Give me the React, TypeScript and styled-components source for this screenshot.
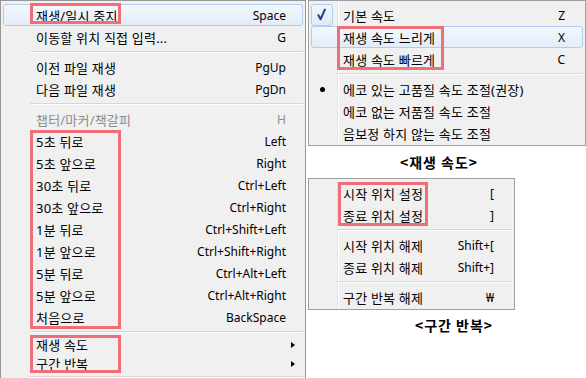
import styled, { createGlobalStyle } from "styled-components";

const GlobalStyle = createGlobalStyle`
  html, body {
    margin: 0;
    padding: 0;
    background: #ffffff;
  }
  body {
    font-family: "Noto Sans", "Noto Sans CJK KR", sans-serif;
    font-size: 12px;
    color: #000000;
  }
`;

const leftTop = [
  { label: "이동할 위치 직접 입력...", key: "G" },
];

const fileItems = [
  { label: "이전 파일 재생", key: "PgUp" },
  { label: "다음 파일 재생", key: "PgDn" },
];

const seekItems = [
  { label: "5초 뒤로", key: "Left" },
  { label: "5초 앞으로", key: "Right" },
  { label: "30초 뒤로", key: "Ctrl+Left" },
  { label: "30초 앞으로", key: "Ctrl+Right" },
  { label: "1분 뒤로", key: "Ctrl+Shift+Left" },
  { label: "1분 앞으로", key: "Ctrl+Shift+Right" },
  { label: "5분 뒤로", key: "Ctrl+Alt+Left" },
  { label: "5분 앞으로", key: "Ctrl+Alt+Right" },
  { label: "처음으로", key: "BackSpace" },
];

const CheckMark = () => (
  <svg width="22" height="22" viewBox="0 0 22 22">
    <polyline
      points="7,10.5 9.6,15.2 14.2,4.8"
      fill="none"
      stroke="#1f3d8a"
      strokeWidth="2"
      strokeLinejoin="round"
    />
  </svg>
);

const App = () => {
  return (
    <>
      <GlobalStyle />
      <Page>
        <LeftMenu>
          <Group $left={27} $width={91} $top={-1} $bottom={2}>
            <Item $active>
              <Label>재생/일시 중지</Label>
              <Key>Space</Key>
            </Item>
          </Group>
          {leftTop.map((item) => (
            <Item key={item.label}>
              <Label>{item.label}</Label>
              <Key>{item.key}</Key>
            </Item>
          ))}
          <Separator />
          {fileItems.map((item) => (
            <Item key={item.label}>
              <Label>{item.label}</Label>
              <Key>{item.key}</Key>
            </Item>
          ))}
          <Separator />
          <Item $disabled>
            <Label>챕터/마커/책갈피</Label>
            <Key>H</Key>
          </Item>
          <Group $left={27} $width={91} $top={0} $bottom={-1}>
            {seekItems.map((item) => (
              <Item key={item.label}>
                <Label>{item.label}</Label>
                <Key>{item.key}</Key>
              </Item>
            ))}
          </Group>
          <Separator $h={7} />
          <Group $left={27} $width={91} $top={0} $bottom={0}>
            <Item $h={19}>
              <Label>재생 속도</Label>
              <Arrow />
            </Item>
            <Item $h={19}>
              <Label>구간 반복</Label>
              <Arrow />
            </Item>
          </Group>
          <Separator $h={7} />
        </LeftMenu>

        <RightColumn>
          <SideMenu $width={278}>
            <SideItem>
              <IconCell>
                <CheckBox>
                  <CheckMark />
                </CheckBox>
              </IconCell>
              <Label>기본 속도</Label>
              <Key>Z</Key>
            </SideItem>
            <Group $left={26} $width={107} $top={0} $bottom={0}>
              <SideItem $active>
                <IconCell />
                <Label>재생 속도 느리게</Label>
                <Key>X</Key>
              </SideItem>
              <SideItem>
                <IconCell />
                <Label>재생 속도 빠르게</Label>
                <Key>C</Key>
              </SideItem>
            </Group>
            <Separator />
            <SideItem>
              <IconCell>
                <BulletBox>
                  <Bullet />
                </BulletBox>
              </IconCell>
              <Label>에코 있는 고품질 속도 조절(권장)</Label>
            </SideItem>
            <SideItem>
              <IconCell />
              <Label>에코 없는 저품질 속도 조절</Label>
            </SideItem>
            <SideItem>
              <IconCell />
              <Label>음보정 하지 않는 속도 조절</Label>
            </SideItem>
          </SideMenu>
          <Caption $h={32} $shift={-8}>&lt;재생 속도&gt;</Caption>

          <SideMenu $width={207}>
            <Group $left={27} $width={90} $top={0} $bottom={0}>
              <SideItem>
                <IconCell />
                <Label>시작 위치 설정</Label>
                <Key>[</Key>
              </SideItem>
              <SideItem>
                <IconCell />
                <Label>종료 위치 설정</Label>
                <Key>]</Key>
              </SideItem>
            </Group>
            <Separator />
            <SideItem>
              <IconCell />
              <Label>시작 위치 해제</Label>
              <Key>Shift+[</Key>
            </SideItem>
            <SideItem>
              <IconCell />
              <Label>종료 위치 해제</Label>
              <Key>Shift+]</Key>
            </SideItem>
            <Separator />
            <SideItem>
              <IconCell />
              <Label>구간 반복 해제</Label>
              <Key>₩</Key>
            </SideItem>
          </SideMenu>
          <Caption $h={30} $shift={7}>&lt;구간 반복&gt;</Caption>
        </RightColumn>
      </Page>
    </>
  );
};

export default App;

const Page = styled.div`
  display: flex;
  align-items: flex-start;
  width: 586px;
  height: 378px;
  overflow: hidden;
`;

const LeftMenu = styled.div`
  flex-shrink: 0;
  width: 306px;
  box-sizing: border-box;
  border: 1px solid #979797;
  background: #f0f0f0;
  padding: 3px 2px;
`;

const Group = styled.div<{
  $left: number;
  $width: number;
  $top: number;
  $bottom: number;
}>`
  position: relative;

  &::after {
    content: "";
    position: absolute;
    left: ${(p) => p.$left}px;
    width: ${(p) => p.$width}px;
    top: ${(p) => p.$top}px;
    bottom: ${(p) => p.$bottom}px;
    border: 3px solid #ef6f78;
    box-sizing: border-box;
    pointer-events: none;
  }
`;

const Item = styled.div<{ $active?: boolean; $disabled?: boolean; $h?: number }>`
  display: flex;
  align-items: center;
  height: ${(p) => p.$h ?? 22}px;
  box-sizing: border-box;
  padding: 0 16px 0 32px;
  border: 1px solid ${(p) => (p.$active ? "#aecdf0" : "transparent")};
  border-radius: 3px;
  background: ${(p) =>
    p.$active ? "linear-gradient(#f4f8fd, #e3ecf8)" : "transparent"};
  color: ${(p) => (p.$disabled ? "#8d8d8d" : "#000000")};
  white-space: nowrap;
`;

const SideItem = styled(Item)`
  padding: 0 17px 0 0;
`;

const Label = styled.span`
  flex: 1;
  font-size: 13px;
  letter-spacing: 0.2px;
`;

const Key = styled.span`
  text-align: right;
`;

const Arrow = styled.span`
  width: 0;
  height: 0;
  margin-right: -9px;
  border-left: 4px solid #000000;
  border-top: 3.5px solid transparent;
  border-bottom: 3.5px solid transparent;
`;

const Separator = styled.div<{ $h?: number }>`
  height: ${(p) => p.$h ?? 8}px;
  display: flex;
  align-items: center;
  padding-left: 27px;

  &::before {
    content: "";
    flex: 1;
    height: 0;
    border-top: 1px solid #d7d7d7;
    border-bottom: 1px solid #ffffff;
  }
`;

const RightColumn = styled.div`
  display: flex;
  flex-direction: column;
  margin-left: 2px;
`;

const SideMenu = styled.div<{ $width: number }>`
  width: ${(p) => p.$width}px;
  box-sizing: border-box;
  border: 1px solid #a0a0a0;
  padding: 3px 2px 1px;
  background:
    linear-gradient(
      to right,
      transparent 28px,
      #e2e3e3 28px,
      #e2e3e3 29px,
      #ffffff 29px,
      #ffffff 30px,
      transparent 30px
    ),
    #f0f0f0;
`;

const IconCell = styled.span`
  display: flex;
  align-items: center;
  width: 31px;
  height: 20px;
  flex-shrink: 0;
`;

const CheckBox = styled.span`
  display: block;
  width: 22px;
  height: 22px;
  margin-left: -1px;
  box-sizing: border-box;
  border: 1px solid #aecdf0;
  border-radius: 3px;
  background: linear-gradient(#f0f6fd, #dfeaf8);

  svg {
    display: block;
    margin: -1px;
  }
`;

const BulletBox = styled.span`
  display: flex;
  align-items: center;
  justify-content: center;
  width: 22px;
  height: 22px;
  margin-left: -1px;
`;

const Bullet = styled.span`
  width: 5px;
  height: 5px;
  border-radius: 50%;
  background: #000000;
  margin-left: 1px;
`;

const Caption = styled.div<{ $h: number; $shift: number }>`
  height: ${(p) => p.$h}px;
  line-height: ${(p) => p.$h}px;
  text-align: center;
  font-family: "Noto Sans CJK KR", sans-serif;
  font-size: 14px;
  font-weight: bold;
  letter-spacing: 1px;
  padding-left: ${(p) => Math.max(p.$shift, 0) * 2}px;
  padding-right: ${(p) => Math.max(-p.$shift, 0) * 2}px;
`;
